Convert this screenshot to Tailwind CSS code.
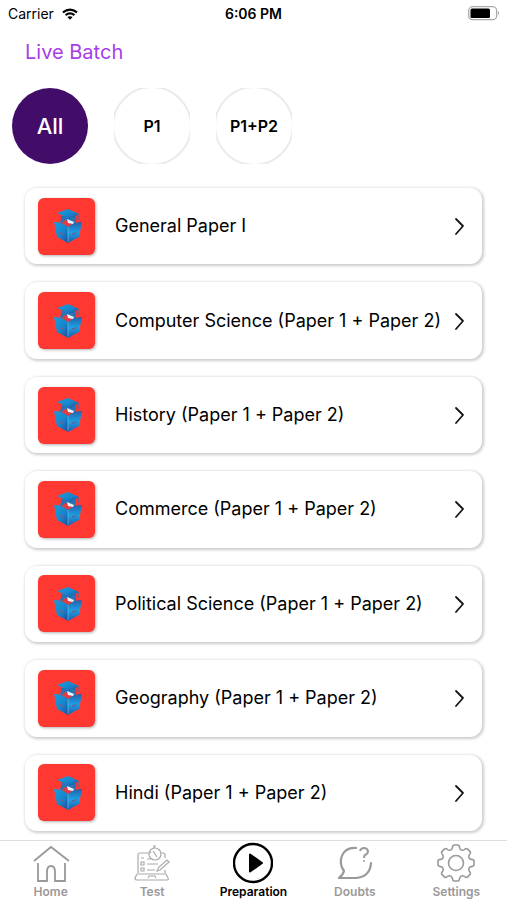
<!DOCTYPE html>
<html lang="en">
<head>
<meta charset="utf-8">
<meta name="viewport" content="width=device-width, initial-scale=1">
<title>Live Batch</title>
<script src="https://cdn.jsdelivr.net/npm/@tailwindcss/browser@4"></script>
</head>
<body class="flex min-h-screen flex-col bg-white font-['Inter','Liberation_Sans',sans-serif] text-black">
<svg class="absolute size-0" aria-hidden="true">
  <defs>
    <linearGradient id="blue" x1="0" y1="0" x2="1" y2="1"><stop offset="0" stop-color="#1b9bdc"/><stop offset=".55" stop-color="#1687cd"/><stop offset="1" stop-color="#24489a"/></linearGradient>
    <linearGradient id="page" x1="0" y1="0" x2="0" y2="1"><stop offset="0" stop-color="#2860ab"/><stop offset=".5" stop-color="#17a2e6"/><stop offset="1" stop-color="#2558a5"/></linearGradient>
    <symbol id="reader" viewBox="0 0 30 38">
      <path d="M8 9v4q-2 2 0 3l3 2q5 3 9 1l3-3V9z" fill="#2774b5"/>
      <path d="M10 14q6-2 10 2l-1 4-5 1-5-4z" fill="#e43b43"/>
      <path d="M14 12l7 3-1 2-5-1z" fill="#e9f2fa"/>
      <path d="M4 6l11-4 11 5-9 5z" fill="url(#blue)"/>
      <path d="M25 7v6" stroke="#2573b6" stroke-width="1"/>
      <path d="M1 15q8 0 14 5v16l-11-6z" fill="url(#blue)"/>
      <path d="M29 15q-8 0-14 5v16l11-6z" fill="url(#page)"/>
      <path d="M15 20v15" stroke="#75bce0" stroke-width=".7"/>
      <path d="M6 25l5 1v2l-4-1zM24 25l-5 1v2l4-1z" fill="#61669b"/>
    </symbol>
    <symbol id="chevron" viewBox="0 0 12 20"><path d="M2 3l7 7-7 8" fill="none" stroke="#151515" stroke-width="1.800" stroke-linecap="round" stroke-linejoin="round"/></symbol>
    <path id="tooth" d="M-5.4-12.9C-4.2-13.4-3.9-14-3.6-15.4Q-3.2-18-2-18H2Q3.2-18 3.6-15.4C3.9-14 4.2-13.4 5.4-12.9"/>
  </defs>
</svg>

<header>
  <div class="grid h-7 grid-cols-3 items-center px-2 text-sm">
    <div class="flex items-center gap-2">
      <span>Carrier</span>
      <svg class="h-3 w-4" viewBox="0 0 17 12" fill="none" stroke="#000" stroke-width="2.200" aria-hidden="true"><path d="M1 4.300q7.500-6 15 0M3.800 7.200q4.700-3.700 9.400 0"/><path d="M8.500 12L5.700 9.300q2.800-2 5.600 0z" fill="#000" stroke="none"/></svg>
    </div>
    <span class="text-center font-semibold whitespace-nowrap">6:06 PM</span>
    <svg class="h-4 w-8 justify-self-end" viewBox="0 0 32 16" aria-label="Battery"><rect x="1.700" y=".7" width="28" height="13" rx="4" fill="#fff" stroke="#aaa" stroke-width="1.300"/><rect x="3.500" y="2.500" width="19.500" height="9.500" rx="1.500"/><path d="M31 5q1.500 2 0 4z" fill="#888"/></svg>
  </div>
  <h1 class="px-[25px] pt-2 text-xl leading-8 text-[#a73ee8]">Live Batch</h1>
</header>

<main class="flex flex-1 flex-col">
  <div class="flex gap-[26px] px-3 pt-5">
    <button class="size-19 rounded-full bg-[#420c69] text-[22px] font-medium text-white">All</button>
    <button class="relative size-19 overflow-hidden text-base font-semibold"><span class="absolute -inset-[2px] rounded-full border-2 border-[#ebebeb]"></span>P1</button>
    <button class="relative size-19 overflow-hidden text-base font-semibold"><span class="absolute -inset-[2px] rounded-full border-2 border-[#ebebeb]"></span>P1+P2</button>
  </div>
  <ul class="grid flex-1 auto-rows-fr gap-[18px] px-[25px] pt-6 pb-[9px] text-lg">
    <li class="grid"><a href="#general" class="flex items-center rounded-xl pr-3 pl-[13px] shadow-[1px_1px_3px_1px_#00000033]"><span class="mr-5 flex size-[57px] items-center justify-center rounded-md bg-[#ff3931] pl-[2px] shadow-[1px_1px_3px_#00000050]"><svg class="h-[38px] w-[30px]"><use href="#reader"/></svg></span><span class="flex-1 whitespace-nowrap">General Paper I</span><svg class="mr-1 h-5 w-3"><use href="#chevron"/></svg></a></li>
  </ul>
</main>

<nav class="grid h-15 grid-cols-5 border-t border-[#dedede] text-xs leading-[14px] font-semibold text-[#999]">
  <a href="#home" class="flex flex-col items-center"><svg class="h-11 w-10" viewBox="0 0 40 44" fill="none" stroke="currentColor" stroke-width="1.800"><path d="M3 20L20 6l18 14M7 22v18h9V31q0-6 4-6t4 6v9h10V22"/></svg>Home</a>
</nav>
<script>
const courses = ["General Paper I", "Computer Science (Paper 1 + Paper 2)", "History (Paper 1 + Paper 2)", "Commerce (Paper 1 + Paper 2)", "Political Science (Paper 1 + Paper 2)", "Geography (Paper 1 + Paper 2)", "Hindi (Paper 1 + Paper 2)"];
const list = document.querySelector("ul"), first = list.firstElementChild;
courses.slice(1).forEach(name => {
  const row = first.cloneNode(true);
  row.querySelector("span.flex-1").textContent = name;
  list.append(row);
});
const icons = {
  Test: '<g stroke-width="1.200" stroke="#aaa"><path d="M6 32V14q0-2 2-2h9M29 12h2q2 0 2 2v3M33 29v3M5 33h29M5 33l-2 4q0 2 2 2h30q2 0 1-2l-2-4M16 37l1-2h6l1 2M9 17h3M9 21h3v3H9zM9 27h3v3H9zM15 18h4M15 23h11M15 29h8M25 30l2-4 8-7 2 2-9 8zM21 5h3M22 5v2"/><circle cx="23" cy="13" r="6"/><path d="M21 10l4 6M18 11l1 1"/></g>',
  Preparation: '<circle cx="20" cy="22" r="19" stroke-width="2.400"/><path d="M17 13.500v17l12-8.500z" fill="currentColor" stroke-width="2" stroke-linejoin="round"/>',
  Doubts: '<path d="M21 7C7 6 2 20 9 30Q8 34 4 37h17q14-1 15-15" stroke-width="2.200" stroke-linecap="round" stroke-linejoin="round"/><path d="M25 10q1-3 4-3t4 3q0 3-3 4-1 1-1 3" stroke-width="2"/><circle cx="29" cy="20" r=".6" stroke-width="1"/>',
  Settings: '<g transform="translate(20 22)" stroke-width="1.600"><circle r="7.500"/>' + [0,45,90,135,180,225,270,315].map(a => '<use href="#tooth" transform="rotate(' + a + ')"/>').join("") + '</g>'
};
const nav = document.querySelector("nav");
for (const [name, art] of Object.entries(icons)) {
  const link = nav.firstElementChild.cloneNode(true);
  link.href = "#" + name.toLowerCase();
  link.querySelector("svg").innerHTML = art;
  link.lastChild.textContent = name;
  if (name === "Preparation") { link.classList.add("text-black"); link.setAttribute("aria-current", "page"); }
  nav.append(link);
}
</script>
</body>
</html>
